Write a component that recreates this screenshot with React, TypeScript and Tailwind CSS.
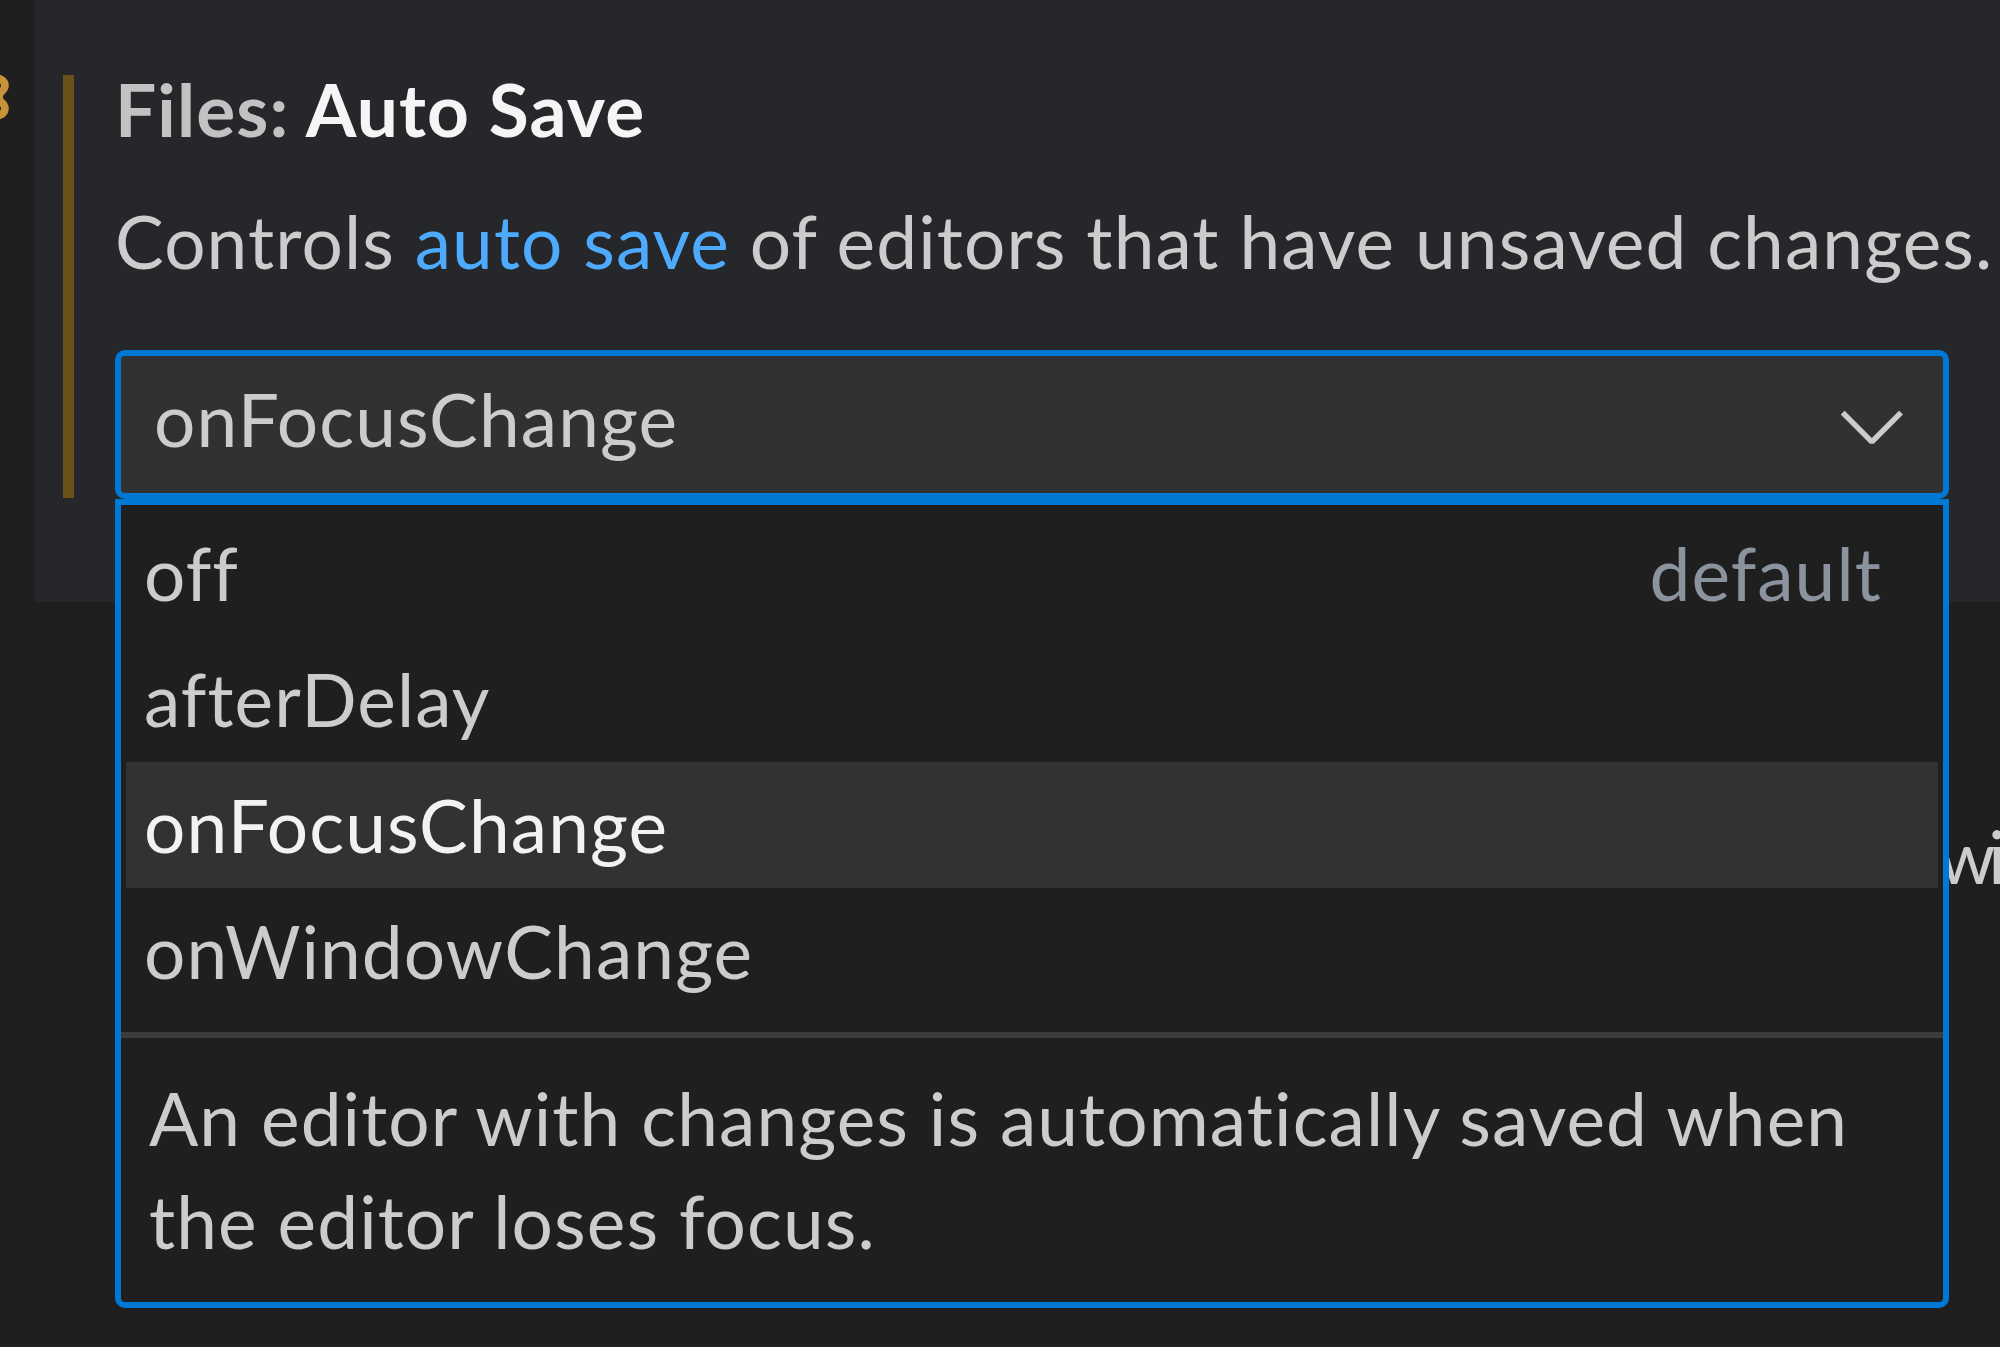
import { Settings } from 'lucide-react'

const options = [
  { label: 'off', note: 'default' },
  { label: 'afterDelay' },
  { label: 'onFocusChange', active: true },
  { label: 'onWindowChange' },
]

export default function App() {
  return (
    <div className="flex w-[2000px] h-[1347px] overflow-hidden bg-[#1f1f1f] font-['Lato','Segoe_UI',sans-serif] text-[73px] tracking-[1.1px] [font-variant-ligatures:none] text-[#cccccc]">
      {/* Left gutter with clipped gear */}
      <div className="w-[35px] shrink-0 overflow-hidden">
        <Settings size={72} strokeWidth={2.6} className="-ml-[58px] mt-[61px] text-[#c8913a]" />
      </div>

      <div className="flex-1 flex flex-col">
        {/* Focused setting row */}
        <div className="flex items-start h-[602px] bg-[#26272a]">
          <div className="ml-[28px] mt-[75px] h-[423px] w-[11px] shrink-0 bg-[#6b5219]" />
          <div className="ml-[41px] w-[1834px] pt-[59px]">
            <div className="leading-[100px] font-bold whitespace-nowrap">
              <span className="text-[#c2c2c2]">Files: </span>
              <span className="text-[#f5f5f5]">Auto Save</span>
            </div>
            <p className="mt-[32px] leading-[100px] whitespace-nowrap">
              Controls <span className="text-[#4daafc]">auto save</span> of editors that have unsaved changes.
            </p>

            {/* Select */}
            <div className="relative mt-[59px]">
              <div className="flex items-start h-[149px] rounded-[10px] border-[6px] border-[#0078d4] bg-[#313131] pl-[33px] pr-[21px]">
                <span className="flex-1 pt-[19px] leading-[88px]">onFocusChange</span>
                <svg width="100" height="100" viewBox="0 0 16 16" className="mt-[19px] text-[#cccccc]" fill="currentColor">
                  <path d="M7.976 10.072l4.357-4.357.62.618L8.284 11h-.618L3 6.333l.619-.618 4.357 4.357z" />
                </svg>
              </div>

              {/* Dropdown list */}
              <div className="absolute left-0 right-0 top-full z-10 rounded-b-[10px] border-[6px] border-[#0078d4] bg-[#1f1f1f]">
                <div className="px-[5px] pt-[5px] pb-[18px]">
                  {options.map(o => (
                    <div
                      key={o.label}
                      className={`flex h-[126px] items-center pl-[18px] pr-[56px] leading-[88px] ${o.active ? 'bg-[#323232] text-[#f2f2f2]' : ''}`}
                    >
                      <span className="flex-1">{o.label}</span>
                      {o.note && <span className="text-[#8b949e]">{o.note}</span>}
                    </div>
                  ))}
                </div>
                <div className="h-[6px] bg-[#3c3c3c]" />
                <div className="px-[28px] pt-[29px] pb-[29px] leading-[103px]">
                  <div className="whitespace-nowrap">An editor with changes is automatically saved when</div>
                  <div className="whitespace-nowrap">the editor loses focus.</div>
                </div>
              </div>
            </div>
          </div>
        </div>

        {/* Next setting, mostly covered by the dropdown */}
        <div className="flex pt-[210px] leading-[88px]">
          <div className="flex-1" />
          <span className="w-[62px] whitespace-nowrap tracking-[-7px]">wi</span>
        </div>
      </div>
    </div>
  )
}
